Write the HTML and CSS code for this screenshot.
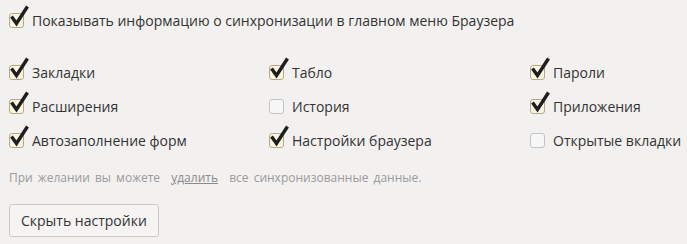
FILE: index.html
```html
<!DOCTYPE html>
<html lang="ru">
<head>
  <meta charset="UTF-8" />
  <title>Синхронизация</title>
  <link rel="stylesheet" href="styles.css">
</head>
<body>
  <main class="sync">
    <label class="opt opt-main">
      <span class="box on"><svg viewBox="0 0 20 20"><path d="M1.5 11.5 L6.5 18.5 L17.5 1.5"/></svg></span>
      Показывать информацию о синхронизации в главном меню Браузера
    </label>

    <div class="sync-grid">
      <label class="opt"><span class="box on"><svg viewBox="0 0 20 20"><path d="M1.5 11.5 L6.5 18.5 L17.5 1.5"/></svg></span>Закладки</label>
      <label class="opt"><span class="box on"><svg viewBox="0 0 20 20"><path d="M1.5 11.5 L6.5 18.5 L17.5 1.5"/></svg></span>Табло</label>
      <label class="opt"><span class="box on"><svg viewBox="0 0 20 20"><path d="M1.5 11.5 L6.5 18.5 L17.5 1.5"/></svg></span>Пароли</label>

      <label class="opt"><span class="box on"><svg viewBox="0 0 20 20"><path d="M1.5 11.5 L6.5 18.5 L17.5 1.5"/></svg></span>Расширения</label>
      <label class="opt"><span class="box"></span>История</label>
      <label class="opt"><span class="box on"><svg viewBox="0 0 20 20"><path d="M1.5 11.5 L6.5 18.5 L17.5 1.5"/></svg></span>Приложения</label>

      <label class="opt"><span class="box on"><svg viewBox="0 0 20 20"><path d="M1.5 11.5 L6.5 18.5 L17.5 1.5"/></svg></span>Автозаполнение форм</label>
      <label class="opt"><span class="box on"><svg viewBox="0 0 20 20"><path d="M1.5 11.5 L6.5 18.5 L17.5 1.5"/></svg></span>Настройки браузера</label>
      <label class="opt"><span class="box"></span>Открытые вкладки</label>
    </div>

    <p class="note">При желании вы можете <a href="#">удалить</a> все синхронизованные данные.</p>

    <button class="btn">Скрыть настройки</button>
  </main>
</body>
</html>
```

FILE: styles.css
```css
body {
  margin: 0;
  background: #f2f1f0;
  font-family: "Open Sans", "Noto Sans", sans-serif;
  color: #333;
}

.sync {
  padding: 10px 10px 0 9px;
}

.opt {
  display: flex;
  align-items: center;
  font-size: 14px;
  height: 20px;
  white-space: nowrap;
}

.opt-main {
  margin-bottom: 32px;
}

/* квадратик чекбокса */
.box {
  position: relative;
  width: 13px;
  height: 13px;
  border: 1px solid #c3c3c3;
  border-radius: 3px;
  background: #f7f7f7;
  margin-right: 8px;
  flex-shrink: 0;
}

.box.on {
  border-color: #b7a88a;
  background: #fbf6e2;
}

.box svg {
  position: absolute;
  left: 0;
  top: -9px;
  width: 20px;
  height: 20px;
  overflow: visible;
}

.box path {
  fill: none;
  stroke: #1e1e1e;
  stroke-width: 3.4;
  stroke-linecap: butt;
  stroke-linejoin: miter;
}

.sync-grid {
  display: grid;
  grid-template-columns: 260px 261px 1fr;
  row-gap: 14px;
}

.note {
  margin: 19px 0 0;
  font-size: 12px;
  color: #9a9a9a;
  word-spacing: 2px;
}

.note a {
  color: #8a8a8a;
  margin: 0 6px;
}

.btn {
  margin-top: 18px;
  font-family: inherit;
  font-size: 14px;
  color: #333;
  background: #f5f4f3;
  border: 1px solid #c9c9c9;
  border-radius: 3px;
  padding: 6px 11px;
  height: 33px;
}
```
